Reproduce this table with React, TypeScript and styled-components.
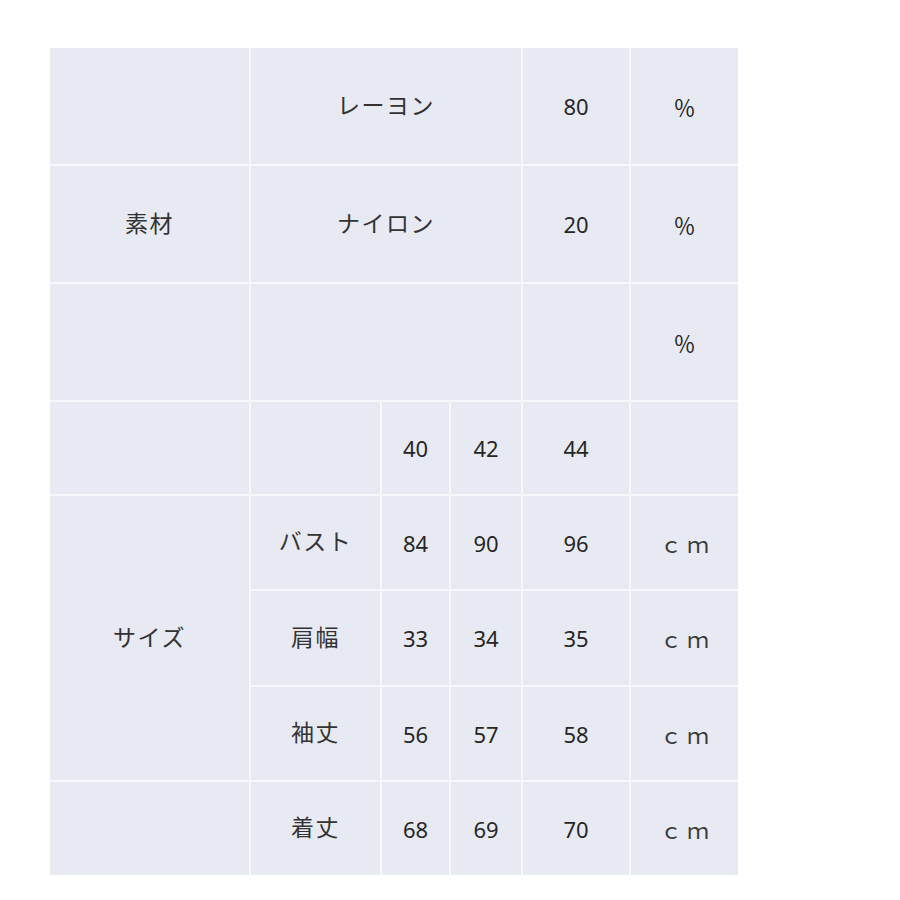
import React from "react";
import styled, { createGlobalStyle } from "styled-components";

const Global = createGlobalStyle`
  html, body { margin: 0; padding: 0; background: #ffffff; }
  body { font-family: "Noto Sans", "Noto Sans CJK JP", sans-serif; }
`;

const Page = styled.div`
  padding: 48px 0 0 50px;
`;

const Grid = styled.div`
  display: grid;
  width: 688px;
  grid-template-columns: 199px 129px 67px 70px 106px 107px;
  grid-template-rows: 116px 116px 116px 92px 93px 94px 93px 93px;
  gap: 2px;
  background: #f7f8fc;
`;

const Cell = styled.div<{ $col?: string; $row?: string; $unit?: boolean }>`
  background: #e8eaf3;
  display: flex;
  align-items: center;
  justify-content: center;
  color: #262626;
  font-size: 22px;
  font-family: "Noto Sans", "Noto Sans CJK JP", sans-serif;
  ${(p) => (p.$col ? `grid-column: ${p.$col};` : "")}
  ${(p) => (p.$row ? `grid-row: ${p.$row};` : "")}
  ${(p) => (p.$unit ? `letter-spacing: 5px; padding-left: 5px; color: #3a3a3a;` : "")}
`;

const JpText = styled.span`
  font-family: "Noto Sans CJK JP", sans-serif;
  font-size: 23px;
  letter-spacing: 1.5px;
  padding-bottom: 5px;
  color: #333333;
`;

export default function App() {
  return (
    <>
      <Global />
      <Page>
        <Grid>
          {/* row 1 */}
          <Cell />
          <Cell $col="2 / 5"><JpText>レーヨン</JpText></Cell>
          <Cell>80</Cell>
          <Cell>％</Cell>
          {/* row 2 */}
          <Cell><JpText>素材</JpText></Cell>
          <Cell $col="2 / 5"><JpText>ナイロン</JpText></Cell>
          <Cell>20</Cell>
          <Cell>％</Cell>
          {/* row 3 */}
          <Cell />
          <Cell $col="2 / 5" />
          <Cell />
          <Cell>％</Cell>
          {/* row 4 */}
          <Cell />
          <Cell />
          <Cell>40</Cell>
          <Cell>42</Cell>
          <Cell>44</Cell>
          <Cell />
          {/* row 5 */}
          <Cell $row="5 / 8"><JpText>サイズ</JpText></Cell>
          <Cell><JpText>バスト</JpText></Cell>
          <Cell>84</Cell>
          <Cell>90</Cell>
          <Cell>96</Cell>
          <Cell $unit>ｃｍ</Cell>
          {/* row 6 */}
          <Cell><JpText>肩幅</JpText></Cell>
          <Cell>33</Cell>
          <Cell>34</Cell>
          <Cell>35</Cell>
          <Cell $unit>ｃｍ</Cell>
          {/* row 7 */}
          <Cell><JpText>袖丈</JpText></Cell>
          <Cell>56</Cell>
          <Cell>57</Cell>
          <Cell>58</Cell>
          <Cell $unit>ｃｍ</Cell>
          {/* row 8 */}
          <Cell />
          <Cell><JpText>着丈</JpText></Cell>
          <Cell>68</Cell>
          <Cell>69</Cell>
          <Cell>70</Cell>
          <Cell $unit>ｃｍ</Cell>
        </Grid>
      </Page>
    </>
  );
}
